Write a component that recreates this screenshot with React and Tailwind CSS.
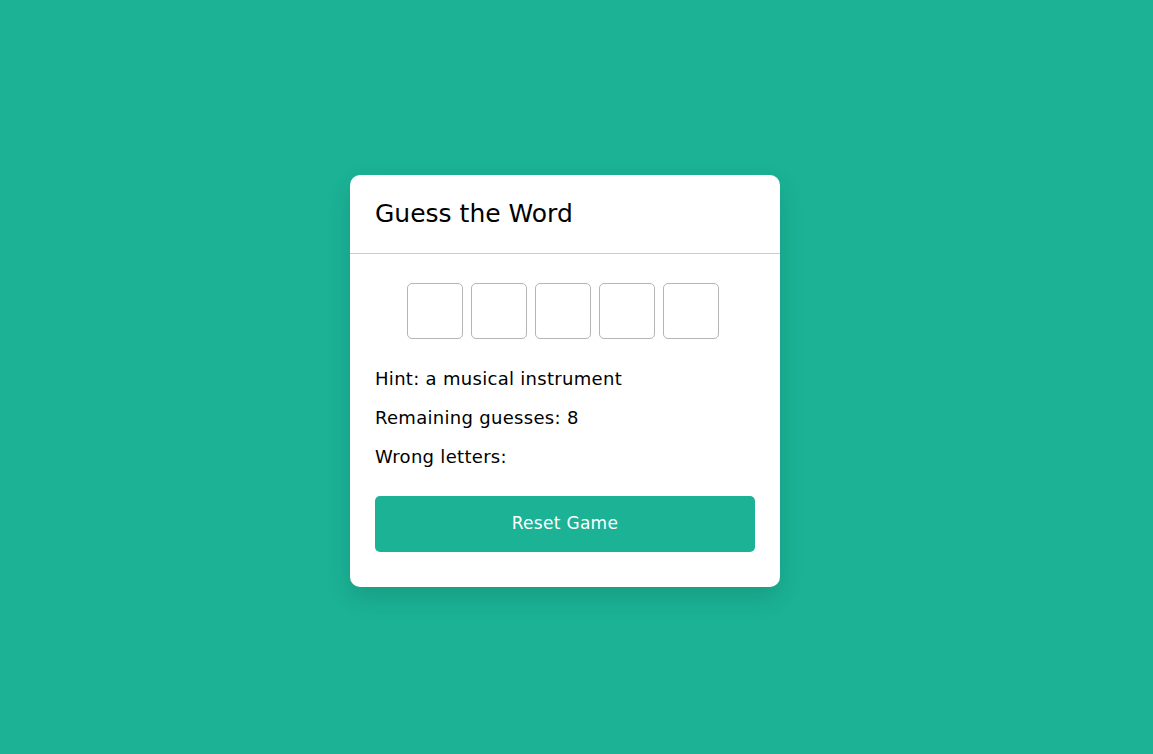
export default function App() {
  const boxes = [0, 1, 2, 3, 4]
  return (
    <div className="flex min-h-screen items-center justify-center bg-[#1bb295] pr-[23px] pt-[7px] font-['DejaVu_Sans',sans-serif]">
      <div className="w-[430px] rounded-[10px] bg-white shadow-[0_10px_25px_rgba(0,0,0,0.12)]">
        <div className="flex h-[79px] items-center border-b border-[#cccccc] px-[25px]">
          <h1 className="text-[25px] text-black">Guess the Word</h1>
        </div>
        <div className="px-[25px] pb-[35px] pt-[29px]">
          <div className="flex justify-center gap-2 pr-1">
            {boxes.map((b) => (
              <input
                key={b}
                type="text"
                maxLength={1}
                className="h-[56px] w-[56px] rounded-[5px] border border-[#b5b5b5] text-center text-2xl outline-none"
              />
            ))}
          </div>
          <div className="mt-[20px] text-[18px] leading-[39px] tracking-[0.3px] text-black">
            <p>Hint: a musical instrument</p>
            <p>Remaining guesses: 8</p>
            <p>Wrong letters:</p>
          </div>
          <button className="mt-[20px] h-[56px] w-full rounded-[5px] bg-[#1bb295] text-[17px] tracking-[0.3px] text-white">
            Reset Game
          </button>
        </div>
      </div>
    </div>
  )
}
